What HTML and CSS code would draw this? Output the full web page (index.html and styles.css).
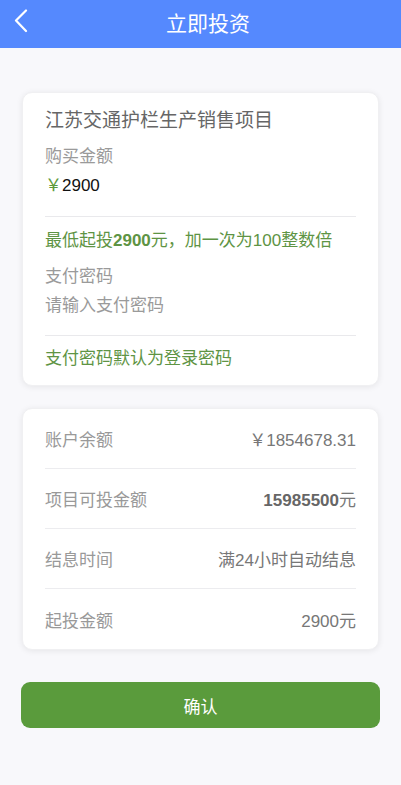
FILE: index.html
```html
<!DOCTYPE html>
<html lang="zh-CN">
<head>
<meta charset="utf-8">
<meta name="viewport" content="width=device-width, initial-scale=1">
<title>立即投资</title>
<link rel="stylesheet" href="styles.css">
</head>
<body>
<header class="topbar">
  <a class="back" href="#" aria-label="返回">
    <svg width="14" height="24" viewBox="0 0 14 24"><polyline points="12,1.5 2,11.5 12,22" fill="none" stroke="#fff" stroke-width="2.2" stroke-linecap="round" stroke-linejoin="round"/></svg>
  </a>
  <h1 class="title">立即投资</h1>
</header>
<main class="page">
  <section class="card form-card">
    <div class="sec sec-top">
      <div class="proj">江苏交通护栏生产销售项目</div>
      <div class="label">购买金额</div>
      <div class="amount"><span class="yen">￥</span>2900</div>
    </div>
    <div class="sec sec-mid">
      <div class="note">最低起投<b>2900</b>元，加一次为100整数倍</div>
      <div class="label pw-label">支付密码</div>
      <input class="pw" type="password" placeholder="请输入支付密码">
    </div>
    <div class="sec sec-bot">
      <div class="note">支付密码默认为登录密码</div>
    </div>
  </section>
  <section class="card info-card">
    <div class="row"><span class="k">账户余额</span><span class="v">￥1854678.31</span></div>
    <div class="row"><span class="k">项目可投金额</span><span class="v"><b>15985500</b>元</span></div>
    <div class="row"><span class="k">结息时间</span><span class="v">满24小时自动结息</span></div>
    <div class="row"><span class="k">起投金额</span><span class="v">2900元</span></div>
  </section>
  <button class="confirm" type="button">确认</button>
</main>
</body>
</html>
```
FILE: styles.css
```css
* { box-sizing: border-box; }
html, body { margin: 0; padding: 0; }
body {
  background: #f8f8fb;
  font-family: "Liberation Sans", "Noto Sans CJK SC", sans-serif;
  min-height: 785px;
}
.topbar {
  height: 48px;
  background: #5589fe;
  display: flex;
  align-items: center;
  justify-content: center;
  position: relative;
}
.back {
  position: absolute;
  left: 14px;
  top: 9px;
  width: 14px;
  height: 24px;
  display: block;
}
.back svg { display: block; }
.title {
  margin: 0;
  color: #fff;
  font-size: 21px;
  font-weight: normal;
  line-height: 48px;
  padding-left: 15px;
}
.page {
  padding: 44px 22px 0;
  display: flex;
  flex-direction: column;
}
.card {
  background: #fff;
  border-radius: 10px;
  box-shadow: 0 1px 6px rgba(0,0,0,0.08);
  border: 1px solid #f0f0f2;
}
.form-card { padding: 14px 22px 12px; }
.sec { font-size: 17px; line-height: 29px; }
.sec-top { padding-bottom: 16px; border-bottom: 1px solid #e9e9ec; }
.proj { font-size: 19px; line-height: 28px; color: #666; margin-bottom: 7px; }
.label { color: #9a9a9a; }
.amount { color: #111; }
.yen { color: #5c9a3c; }
.sec-mid { padding: 9px 0 15px; border-bottom: 1px solid #e9e9ec; }
.note { color: #5e9444; }
.note b { font-weight: bold; }
.pw-label { margin-top: 7px; }
.pw {
  display: block;
  width: 100%;
  border: 0;
  outline: none;
  padding: 0;
  margin: 0;
  height: 29px;
  font: inherit;
  font-size: 17px;
  color: #666;
  background: transparent;
}
.pw::placeholder { color: #9a9a9a; }
.sec-bot { padding-top: 8px; }
.info-card { margin-top: 22px; padding: 0 22px; }
.row {
  height: 60px;
  display: flex;
  align-items: center;
  justify-content: space-between;
  border-bottom: 1px solid #ececef;
  font-size: 17px;
}
.row:last-child { border-bottom: 0; }
.k { color: #999; }
.v { color: #777; }
.v b { color: #666; }
.confirm {
  margin: 32px -1px 0;
  height: 46px;
  border: 0;
  border-radius: 9px;
  background: #5a9b3c;
  color: #fff;
  font-family: inherit;
  font-size: 17px;
  font-weight: normal;
}
```
